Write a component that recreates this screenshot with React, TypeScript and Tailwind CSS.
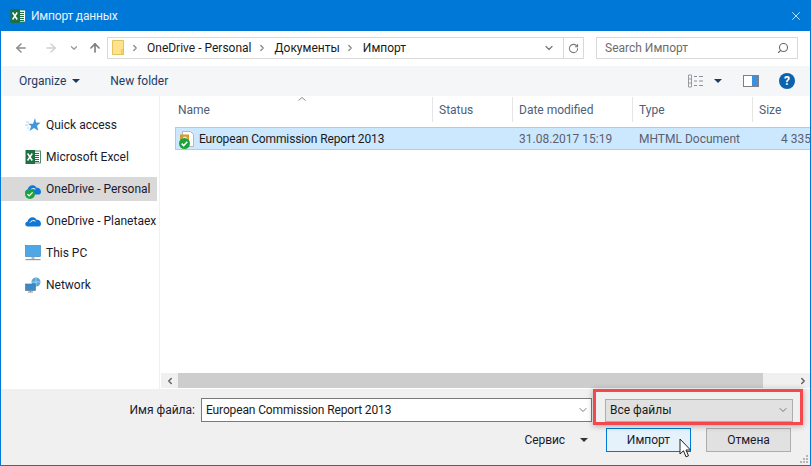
import { ArrowLeft, ArrowRight, ArrowUp, ChevronDown, ChevronLeft, ChevronRight, RotateCw, Search, X } from "lucide-react";

function ExcelIcon({ size = 16 }: { size?: number }) {
  return (
    <svg width={size} height={size} viewBox="0 0 16 16" className="shrink-0">
      <rect x="8" y="2" width="7.5" height="12" fill="#fff" stroke="#217346" strokeWidth="0.8" />
      <path d="M10 4.5h4M10 6.5h4M10 8.5h4M10 10.5h4M10 12.5h4" stroke="#217346" strokeWidth="1" />
      <rect x="0.5" y="1" width="9.5" height="14" fill="#1e6f42" />
      <path d="M2.6 4.5l4.6 7M7.2 4.5l-4.6 7" stroke="#fff" strokeWidth="1.5" />
    </svg>
  );
}

function CheckBadge({ size = 10 }: { size?: number }) {
  return (
    <svg width={size} height={size} viewBox="0 0 9 9" className="absolute left-0 -bottom-[2px]">
      <circle cx="4.5" cy="4.5" r="4.5" fill="#1ea33a" />
      <path d="M2.2 4.6l1.6 1.6 3-3.2" stroke="#fff" strokeWidth="1.2" fill="none" />
    </svg>
  );
}

function CloudIcon({ badge }: { badge?: boolean }) {
  return (
    <div className="relative w-4 h-4 shrink-0">
      <svg width="16" height="16" viewBox="0 0 16 16">
        <path d="M3 13.500c-3.400 0-3.600-4.400-.600-4.800C3 5.800 5.500 4 7.800 4.200c1.700.100 3 1.100 3.600 2.600 2.600-.500 4.600 1.500 4.600 4 0 1.600-.800 2.700-2 2.700z" fill="#0f78d4" />
        <path d="M5 9.700c1-2 3.500-2.800 5.500-1.500" stroke="#fff" strokeWidth="1" fill="none" />
      </svg>
      {badge && <CheckBadge />}
    </div>
  );
}

function StarIcon() {
  return (
    <svg width="16" height="16" viewBox="0 0 16 16" className="shrink-0">
      <path d="M10 1l1 4.500 4.500.300-3.500 3 1.300 5-4.300-2.800-4.500 3 1.700-5-3.200-2.300 5 .100z" fill="#3f97dc" />
      <path d="M1 5h3M0 8h3M2 11h2" stroke="#a9d3f2" strokeWidth="1" />
    </svg>
  );
}

function PcIcon() {
  return (
    <svg width="16" height="16" viewBox="0 0 16 16" className="shrink-0">
      <rect x="0.500" y="0.500" width="15" height="11" fill="#4fa8e6" stroke="#2a7fc0" strokeWidth="0.600" />
      <rect x="6.500" y="12" width="3" height="2" fill="#b5b5b5" />
      <rect x="0.500" y="14" width="15" height="1.200" fill="#9a9a9a" />
    </svg>
  );
}

function NetworkIcon() {
  return (
    <svg width="16" height="16" viewBox="0 0 16 16" className="shrink-0">
      <circle cx="11" cy="5" r="4.500" fill="#5aa5d8" />
      <path d="M7 5h8M11 .800v8.400" stroke="#cfe6f6" strokeWidth="0.600" />
      <rect x="0.500" y="7" width="10" height="6.500" fill="#3b8bcb" stroke="#4f6f88" strokeWidth="0.600" />
      <path d="M3 15h5M5.500 13.500V15" stroke="#8a8a8a" strokeWidth="1" />
    </svg>
  );
}

function FileIcon() {
  return (
    <div className="relative w-4 h-4 shrink-0">
      <svg width="16" height="16" viewBox="0 0 16 16">
        <path d="M3.500 .500h8l3 3v12h-11z" fill="#fff" stroke="#a8a8a8" strokeWidth="0.800" />
        <rect x="1" y="3.500" width="9" height="9" fill="#d39a2f" />
        <circle cx="6" cy="8" r="2.500" fill="#f3e2b8" />
      </svg>
      <CheckBadge size={11} />
    </div>
  );
}

function SideItem({ icon, label, active }: { icon: React.ReactNode; label: string; active?: boolean }) {
  return (
    <div className={`h-6 w-[156px] flex items-center pl-[24px] gap-[5px] overflow-hidden whitespace-nowrap ${active ? "bg-[#d9d9d9]" : ""}`}>
      {icon}
      <span>{label}</span>
    </div>
  );
}

function ColHead({ label, className }: { label: string; className: string }) {
  return (
    <div className={`h-[25px] border-r border-[#e5e5e5] pl-[6px] flex items-center text-[#4c607a] ${className}`}>{label}</div>
  );
}

export default function App() {
  return (
    <div className="relative w-[811px] h-[466px] overflow-hidden border border-[#0078d7] bg-white flex flex-col text-[12px] text-[#1a1a2e] font-['Roboto','Noto_Sans',sans-serif]">
      {/* title bar */}
      <div className="h-[30px] shrink-0 bg-[#0078d7] flex items-center pl-[9px] pr-[7px] text-white">
        <ExcelIcon />
        <span className="ml-[5px] text-[#e8f2fb] tracking-[-0.2px]">Импорт данных</span>
        <X className="ml-auto w-[14px] h-[14px] text-white" strokeWidth={1.3} />
      </div>

      {/* address row */}
      <div className="h-[35px] shrink-0 flex items-center pl-[13px] pb-px">
        <ArrowLeft className="w-[14px] h-[14px] text-[#8a8a8a]" strokeWidth={2.5} />
        <ArrowRight className="ml-[16px] w-[14px] h-[14px] text-[#d0d0d0]" strokeWidth={2.5} />
        <ChevronDown className="ml-[11px] w-[10px] h-[10px] text-[#9a9a9a]" strokeWidth={3} />
        <ArrowUp className="ml-[9px] w-[14px] h-[14px] text-[#7e7e7e]" strokeWidth={2.8} />
        <div className="ml-[5px] w-[477px] h-[22px] border border-[#d9d9d9] flex items-center pl-[4px] text-[#1a1a1a]">
          <svg width="13" height="16" viewBox="0 0 13 16" className="shrink-0">
            <path d="M.5.500h11v14h-11z" fill="#ffe28c" stroke="#e2c35e" />
            <path d="M9.500 9.500h2v5h-2z" fill="#f7d36a" stroke="#e0b84a" strokeWidth="0.5" />
          </svg>
          <ChevronRight className="ml-[5px] w-[10px] h-[10px] text-[#8a8a8a]" strokeWidth={3} />
          <span className="ml-[7px]">OneDrive - Personal</span>
          <ChevronRight className="ml-[5px] w-[10px] h-[10px] text-[#8a8a8a]" strokeWidth={3} />
          <span className="ml-[8px]">Документы</span>
          <ChevronRight className="ml-[5px] w-[10px] h-[10px] text-[#8a8a8a]" strokeWidth={3} />
          <span className="ml-[8px]">Импорт</span>
          <ChevronDown className="ml-auto mr-[8px] w-[12px] h-[12px] text-[#7a7a7a]" strokeWidth={2.5} />
          <div className="w-[20px] h-full border-l border-[#d9d9d9] flex items-center justify-center">
            <RotateCw className="w-[11px] h-[11px] text-[#7a7a7a]" strokeWidth={2.2} />
          </div>
        </div>
        <div className="ml-[12px] w-[202px] h-[22px] border border-[#d9d9d9] flex items-center pl-[8px] pr-[8px] text-[#6d6d6d]">
          <span>Search Импорт</span>
          <Search className="ml-auto w-[12px] h-[12px] text-[#6a6a6a] -scale-x-100" strokeWidth={2.2} />
        </div>
      </div>

      {/* toolbar */}
      <div className="h-[30px] shrink-0 bg-[#f5f6f7] flex items-center pl-[18px] pr-[15px] text-[#1f3a5f]">
        <span>Organize</span>
        <svg width="8" height="4" viewBox="0 0 8 4" className="ml-[6px]"><path d="M0 0h8L4 4z" fill="#1f3a5f" /></svg>
        <span className="ml-[30px]">New folder</span>
        <svg width="16" height="14" viewBox="0 0 16 14" className="ml-auto">
          <path d="M.5 1h3v12h-3zM.5 5h3M.5 9h3" stroke="#9a9a9a" fill="none" />
          <path d="M6 2.500h3M11 2.500h4M6 7h3M11 7h4M6 11.500h3M11 11.500h4" stroke="#8a9099" />
        </svg>
        <svg width="8" height="4" viewBox="0 0 8 4" className="ml-[10px]"><path d="M0 0h8L4 4z" fill="#1f3a5f" /></svg>
        <div className="ml-[21px] w-[16px] h-[12px] border border-[#7f7f7f] bg-white flex justify-end">
          <div className="w-[6px] bg-[#3f8fdb]" />
        </div>
        <div className="ml-[20px] w-[16px] h-[16px] rounded-full bg-[#0d62ad] text-white text-[12px] font-bold flex items-center justify-center">?</div>
      </div>

      {/* main area */}
      <div className="flex-1 flex min-h-0">
        <div className="w-[159px] shrink-0 border-r border-[#f0f0f0] pt-[17px] flex flex-col gap-2">
          <SideItem icon={<StarIcon />} label="Quick access" />
          <SideItem icon={<ExcelIcon />} label="Microsoft Excel" />
          <SideItem icon={<CloudIcon badge />} label="OneDrive - Personal" active />
          <SideItem icon={<CloudIcon />} label="OneDrive - Planetaex" />
          <SideItem icon={<PcIcon />} label="This PC" />
          <SideItem icon={<NetworkIcon />} label="Network" />
        </div>
        <div className="flex-1 min-w-0 flex flex-col">
          <div className="relative flex h-[25px] shrink-0 mt-px pl-[12px]">
            <ColHead label="Name" className="w-[261px]" />
            <ColHead label="Status" className="w-[80px]" />
            <ColHead label="Date modified" className="w-[120px]" />
            <ColHead label="Type" className="w-[120px]" />
            <div className="pl-[6px] flex items-center text-[#4c607a]">Size</div>
            <svg width="8" height="4" viewBox="0 0 8 4" className="absolute left-[138px] top-0">
              <path d="M.5 3.500L4 .500l3.500 3" stroke="#8a8a8a" fill="none" />
            </svg>
          </div>
          <div className="ml-[15px] mt-[5px] h-[23px] shrink-0 bg-[#cce8ff] border border-[#99d1ff] border-r-0 flex items-center whitespace-nowrap overflow-hidden">
            <div className="w-[343px] shrink-0 pl-[3px] flex items-center gap-[4px] text-[#1a1a1a]">
              <FileIcon />
              <span className="tracking-[-0.13px]">European Commission Report 2013</span>
            </div>
            <span className="w-[120px] shrink-0 text-[#5e5e6e]">31.08.2017 15:19</span>
            <span className="w-[142px] shrink-0 text-[#5e5e6e]">MHTML Document</span>
            <span className="text-[#5e5e6e]">4 335</span>
          </div>
          <div className="flex-1" />
          <div className="h-[15px] shrink-0 ml-px mb-px flex bg-[#f0f0f0]">
            <div className="w-[17px] flex items-center justify-center">
              <ChevronLeft className="w-[10px] h-[10px] text-[#606060]" strokeWidth={3.5} />
            </div>
            <div className="w-[585px] bg-[#cdcdcd]" />
            <div className="flex-1 flex items-center justify-end pr-[2px]">
              <ChevronRight className="w-[10px] h-[10px] text-[#606060]" strokeWidth={3.5} />
            </div>
          </div>
        </div>
      </div>

      {/* footer */}
      <div className="h-[76px] shrink-0 bg-[#f0f0f0] flex flex-col pt-[9px]">
        <div className="flex items-center h-[24px]">
          <span className="w-[194px] text-right">Имя файла:</span>
          <div className="ml-[6px] w-[391px] h-[24px] bg-white border border-[#7a7a7a] flex items-center pl-[4px] text-[#1a1a1a]">
            <span className="tracking-[-0.13px]">European Commission Report 2013</span>
            <ChevronDown className="ml-auto mr-[2px] w-[12px] h-[12px] text-[#6a6a6a]" strokeWidth={1.8} />
          </div>
          <div className="ml-[13px] w-[188px] h-[23px] bg-[#e1e1e1] border border-[#adadad] flex items-center pl-[4px] text-[#1a1a1a]">
            <span>Все файлы</span>
            <ChevronDown className="ml-auto mr-[3px] w-[12px] h-[12px] text-[#6a6a6a]" strokeWidth={1.8} />
          </div>
        </div>
        <div className="flex items-center justify-end mt-[6px] h-[24px] pr-[19px]">
          <span className="tracking-[-0.1px]">Сервис</span>
          <svg width="8" height="4" viewBox="0 0 8 4" className="ml-[15px]"><path d="M0 0h8L4 4z" fill="#333" /></svg>
          <div className="ml-[18px] w-[85px] h-[24px] bg-[#e5f1fb] border border-[#0078d7] flex items-center justify-center">Импорт</div>
          <div className="ml-[15px] w-[85px] h-[24px] bg-[#e1e1e1] border border-[#adadad] flex items-center justify-center">Отмена</div>
        </div>
      </div>

      {/* red callout over the file type combo */}
      <div className="absolute left-[592px] top-[388px] w-[210px] h-[36px] border-[3px] border-[#f5484d] shadow-[0_1px_6px_rgba(0,0,0,0.3)]" />

      {/* mouse cursor */}
      <svg width="13" height="20" viewBox="0 0 13 20" className="absolute left-[678px] top-[437px]">
        <path d="M1 1v15l3.500-3.200 2.500 6 2.500-1-2.500-5.800h4.500z" fill="#fff" stroke="#222" strokeWidth="1" />
      </svg>

      {/* resize grip */}
      <svg width="10" height="10" viewBox="0 0 10 10" className="absolute right-[1px] bottom-[1px]">
        <path d="M7 1h2v2H7zM4 4h2v2H4zM7 4h2v2H7zM1 7h2v2H1zM4 7h2v2H4zM7 7h2v2H7z" fill="#b5b5b5" />
      </svg>
    </div>
  );
}
